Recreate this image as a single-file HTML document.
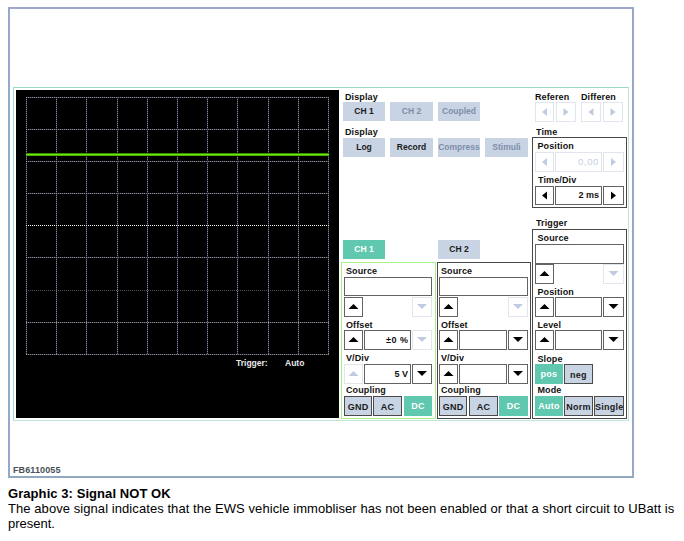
<!DOCTYPE html><html><head><meta charset="utf-8"><style>
html,body{margin:0;padding:0;background:#fff;width:684px;height:541px;overflow:hidden;}
body{position:relative;font-family:"Liberation Sans",sans-serif;}
div{position:absolute;box-sizing:border-box;}
.lbl{font-weight:bold;font-size:9px;line-height:12px;height:12px;color:#111;white-space:nowrap;letter-spacing:0.12px;}
.btn{background:#c8d4e4;font-weight:bold;font-size:8.5px;color:#1a1a1a;text-align:center;white-space:nowrap;}
.dis{color:#7e8ea8;}
.tl{background:#5fc8ae;color:#fff;}
.bb{border:1px solid #4a4a4a;}
.ab{border:1px solid #555;background:#fff;}
.abd{border:1px solid #e2e6ee;background:#fff;}
.fld{border:1px solid #636363;background:#fff;font-size:9px;font-weight:bold;text-align:right;white-space:nowrap;color:#111;}
svg{position:absolute;left:0;top:0;}
</style></head><body>
<div style="left:8px;top:7px;width:626px;height:471px;border:2px solid #94a8cc;border-top-color:#9ea8d0;border-bottom-color:#90a8c0;border-right-color:#98a8c8;"></div>
<div style="left:13px;top:87px;width:616px;height:334px;border:1px solid #9ed8c6;border-right-color:#c0e6da;border-bottom-color:#c2e6dc;"></div>
<div style="left:16px;top:90px;width:323px;height:328px;background:#000;"></div>
<div class="lbl" style="left:345px;top:90.73px;font-size:9px;color:#111;">Display</div>
<div class="btn btn" style="left:343px;top:102px;width:42px;height:19px;line-height:19px;font-size:8.5px;">CH 1</div>
<div class="btn btn dis" style="left:390px;top:102px;width:43px;height:19px;line-height:19px;font-size:8.5px;">CH 2</div>
<div class="btn btn dis" style="left:438px;top:102px;width:42px;height:19px;line-height:19px;font-size:8.5px;">Coupled</div>
<div class="lbl" style="left:345px;top:126.03px;font-size:9px;color:#111;">Display</div>
<div class="btn btn" style="left:343px;top:138px;width:42px;height:19px;line-height:19px;font-size:8.5px;">Log</div>
<div class="btn btn" style="left:390px;top:138px;width:43px;height:19px;line-height:19px;font-size:8.5px;">Record</div>
<div class="btn btn dis" style="left:438px;top:138px;width:42px;height:19px;line-height:19px;font-size:8.5px;">Compress</div>
<div class="btn btn dis" style="left:485px;top:138px;width:43px;height:19px;line-height:19px;font-size:8.5px;">Stimuli</div>
<div class="lbl" style="left:535px;top:90.73px;font-size:9px;color:#111;">Referen</div>
<div class="lbl" style="left:581px;top:90.73px;font-size:9px;color:#111;">Differen</div>
<div style="left:535px;top:102px;width:19px;height:20px;border:1px solid #e0e5ee;background:#fff;"></div>
<div style="left:556px;top:102px;width:20px;height:20px;border:1px solid #e0e5ee;background:#fff;"></div>
<div style="left:581px;top:102px;width:20px;height:20px;border:1px solid #e0e5ee;background:#fff;"></div>
<div style="left:603px;top:102px;width:20px;height:20px;border:1px solid #e0e5ee;background:#fff;"></div>
<div class="lbl" style="left:536px;top:125.63px;font-size:9px;color:#111;">Time</div>
<div style="left:532px;top:137px;width:95px;height:71px;border:1px solid #484848;"></div>
<div class="lbl" style="left:537.5px;top:140.03px;font-size:9px;color:#111;">Position</div>
<div style="left:535px;top:152px;width:19px;height:20px;border:1px solid #e0e5ee;background:#fff;"></div>
<div class="fld" style="left:555px;top:152px;width:47px;height:20px;line-height:18px;border-color:#e0e5ee;color:#c4d0e2;padding-right:2px;"><span style="font-weight:normal;letter-spacing:0.6px;font-size:9.5px">0,00</span></div>
<div style="left:603px;top:152px;width:21px;height:20px;border:1px solid #e0e5ee;background:#fff;"></div>
<div class="lbl" style="left:538px;top:174.03px;font-size:9px;color:#111;">Time/Div</div>
<div style="left:535px;top:186px;width:19px;height:19px;border:1px solid #636363;background:#fff;"></div>
<div class="fld" style="left:555px;top:186px;width:47px;height:19px;line-height:17px;border-color:#636363;color:#111;padding-right:2px;">2 ms</div>
<div style="left:603px;top:186px;width:21px;height:19px;border:1px solid #636363;background:#fff;"></div>
<div class="lbl" style="left:536px;top:217.03px;font-size:9px;color:#111;">Trigger</div>
<div style="left:532px;top:229px;width:95px;height:190px;border:1px solid #484848;"></div>
<div class="lbl" style="left:537.5px;top:232.03px;font-size:9px;color:#111;">Source</div>
<div class="fld" style="left:535px;top:244px;width:89px;height:20px;line-height:18px;border-color:#636363;color:#111;padding-right:2px;"></div>
<div style="left:535px;top:264px;width:19px;height:20px;border:1px solid #636363;background:#fff;"></div>
<div style="left:603px;top:264px;width:21px;height:20px;border:1px solid #e0e5ee;background:#fff;"></div>
<div class="lbl" style="left:537.5px;top:286.03px;font-size:9px;color:#111;">Position</div>
<div style="left:535px;top:297px;width:19px;height:20px;border:1px solid #636363;background:#fff;"></div>
<div class="fld" style="left:555px;top:297px;width:47px;height:20px;line-height:18px;border-color:#636363;color:#111;padding-right:2px;"></div>
<div style="left:603px;top:297px;width:21px;height:20px;border:1px solid #636363;background:#fff;"></div>
<div class="lbl" style="left:537.5px;top:319.03px;font-size:9px;color:#111;">Level</div>
<div style="left:535px;top:330px;width:19px;height:20px;border:1px solid #636363;background:#fff;"></div>
<div class="fld" style="left:555px;top:330px;width:47px;height:20px;line-height:18px;border-color:#636363;color:#111;padding-right:2px;"></div>
<div style="left:603px;top:330px;width:21px;height:20px;border:1px solid #636363;background:#fff;"></div>
<div class="lbl" style="left:537.5px;top:352.63px;font-size:9px;color:#111;">Slope</div>
<div class="btn btn tl" style="left:535px;top:364px;width:28px;height:20px;line-height:20px;font-size:9px;letter-spacing:0.25px;">pos</div>
<div class="btn btn bb" style="left:564px;top:364px;width:29px;height:20px;line-height:20px;font-size:9px;letter-spacing:0.25px;">neg</div>
<div class="lbl" style="left:537.5px;top:384.43px;font-size:9px;color:#111;">Mode</div>
<div class="btn btn tl" style="left:535px;top:396px;width:28px;height:20px;line-height:20px;font-size:9px;letter-spacing:0.25px;">Auto</div>
<div class="btn btn bb" style="left:564px;top:396px;width:29px;height:20px;line-height:20px;font-size:9px;letter-spacing:0.25px;">Norm</div>
<div class="btn btn bb" style="left:594px;top:396px;width:30px;height:20px;line-height:20px;font-size:9px;letter-spacing:0.25px;">Single</div>
<div class="btn btn tl" style="left:343px;top:240px;width:42px;height:19px;line-height:19px;font-size:8.5px;">CH 1</div>
<div class="btn btn" style="left:438px;top:240px;width:42px;height:19px;line-height:19px;font-size:8.5px;">CH 2</div>
<div style="left:341px;top:262px;width:95px;height:157px;border:1px solid #a8f088;"></div>
<div class="lbl" style="left:346px;top:264.73px;font-size:9px;color:#111;">Source</div>
<div class="fld" style="left:344px;top:277px;width:88px;height:19px;line-height:17px;border-color:#636363;color:#111;padding-right:2px;"></div>
<div style="left:344px;top:297px;width:19px;height:20px;border:1px solid #636363;background:#fff;"></div>
<div style="left:412px;top:297px;width:20px;height:20px;border:1px solid #e0e5ee;background:#fff;"></div>
<div class="lbl" style="left:346px;top:318.83px;font-size:9px;color:#111;">Offset</div>
<div style="left:344px;top:330px;width:19px;height:20px;border:1px solid #636363;background:#fff;"></div>
<div class="fld" style="left:364px;top:330px;width:47px;height:20px;line-height:18px;border-color:#636363;color:#111;padding-right:2px;"><span style="letter-spacing:0.5px;margin-right:-0.5px">&plusmn;0 %</span></div>
<div style="left:412px;top:330px;width:20px;height:20px;border:1px solid #e0e5ee;background:#fff;"></div>
<div class="lbl" style="left:346px;top:351.73px;font-size:9px;color:#111;">V/Div</div>
<div style="left:344px;top:364px;width:19px;height:20px;border:1px solid #e0e5ee;background:#fff;"></div>
<div class="fld" style="left:364px;top:364px;width:47px;height:20px;line-height:18px;border-color:#636363;color:#111;padding-right:2px;">5 V</div>
<div style="left:412px;top:364px;width:20px;height:20px;border:1px solid #636363;background:#fff;"></div>
<div class="lbl" style="left:346px;top:384.43px;font-size:9px;color:#111;">Coupling</div>
<div class="btn btn bb" style="left:344px;top:396px;width:28px;height:20px;line-height:20px;font-size:9px;letter-spacing:0.25px;">GND</div>
<div class="btn btn bb" style="left:373px;top:396px;width:29px;height:20px;line-height:20px;font-size:9px;letter-spacing:0.25px;">AC</div>
<div class="btn btn tl" style="left:404px;top:396px;width:28px;height:20px;line-height:20px;font-size:9px;letter-spacing:0.25px;">DC</div>
<div style="left:437px;top:262px;width:94px;height:157px;border:1px solid #484848;"></div>
<div class="lbl" style="left:441px;top:264.73px;font-size:9px;color:#111;">Source</div>
<div class="fld" style="left:439px;top:277px;width:89px;height:19px;line-height:17px;border-color:#636363;color:#111;padding-right:2px;"></div>
<div style="left:439px;top:297px;width:19px;height:20px;border:1px solid #636363;background:#fff;"></div>
<div style="left:508px;top:297px;width:20px;height:20px;border:1px solid #e0e5ee;background:#fff;"></div>
<div class="lbl" style="left:441px;top:318.83px;font-size:9px;color:#111;">Offset</div>
<div style="left:439px;top:330px;width:19px;height:20px;border:1px solid #636363;background:#fff;"></div>
<div class="fld" style="left:459px;top:330px;width:48px;height:20px;line-height:18px;border-color:#636363;color:#111;padding-right:2px;"></div>
<div style="left:508px;top:330px;width:20px;height:20px;border:1px solid #636363;background:#fff;"></div>
<div class="lbl" style="left:441px;top:351.73px;font-size:9px;color:#111;">V/Div</div>
<div style="left:439px;top:364px;width:19px;height:20px;border:1px solid #636363;background:#fff;"></div>
<div class="fld" style="left:459px;top:364px;width:48px;height:20px;line-height:18px;border-color:#636363;color:#111;padding-right:2px;"></div>
<div style="left:508px;top:364px;width:20px;height:20px;border:1px solid #636363;background:#fff;"></div>
<div class="lbl" style="left:441px;top:384.43px;font-size:9px;color:#111;">Coupling</div>
<div class="btn btn bb" style="left:439px;top:396px;width:28px;height:20px;line-height:20px;font-size:9px;letter-spacing:0.25px;">GND</div>
<div class="btn btn bb" style="left:469px;top:396px;width:29px;height:20px;line-height:20px;font-size:9px;letter-spacing:0.25px;">AC</div>
<div class="btn btn tl" style="left:499px;top:396px;width:29px;height:20px;line-height:20px;font-size:9px;letter-spacing:0.25px;">DC</div>
<div class="lbl" style="left:236px;top:357.49px;font-size:8.5px;color:#e8e8e8;letter-spacing:0;">Trigger:</div>
<div class="lbl" style="left:285px;top:357.49px;font-size:8.5px;color:#e8e8e8;letter-spacing:0;">Auto</div>
<div class="lbl" style="left:13px;top:463.83px;font-size:9px;color:#485058;">FB6110055</div>
<div style="left:8px;top:486px;width:680px;font-size:13px;line-height:15px;color:#000;white-space:nowrap;"><b style="letter-spacing:0.07px">Graphic 3: Signal NOT OK</b><br><span style="letter-spacing:0.07px">The above signal indicates that the EWS vehicle immobliser has not been enabled or that a short circuit to UBatt is</span><br>present.</div>
<svg width="684" height="541" shape-rendering="crispEdges">
<line x1="26.5" y1="97" x2="26.5" y2="355" stroke="#2c3040" stroke-width="1"/>
<line x1="26.5" y1="97" x2="26.5" y2="355" stroke="#8088a0" stroke-width="1" stroke-dasharray="1 1"/>
<line x1="56.5" y1="97" x2="56.5" y2="355" stroke="#2c3040" stroke-width="1"/>
<line x1="56.5" y1="97" x2="56.5" y2="355" stroke="#8088a0" stroke-width="1" stroke-dasharray="1 1"/>
<line x1="86.5" y1="97" x2="86.5" y2="355" stroke="#2c3040" stroke-width="1"/>
<line x1="86.5" y1="97" x2="86.5" y2="355" stroke="#8088a0" stroke-width="1" stroke-dasharray="1 1"/>
<line x1="117.5" y1="97" x2="117.5" y2="355" stroke="#2c3040" stroke-width="1"/>
<line x1="117.5" y1="97" x2="117.5" y2="355" stroke="#8088a0" stroke-width="1" stroke-dasharray="1 1"/>
<line x1="147.5" y1="97" x2="147.5" y2="355" stroke="#2c3040" stroke-width="1"/>
<line x1="147.5" y1="97" x2="147.5" y2="355" stroke="#8088a0" stroke-width="1" stroke-dasharray="1 1"/>
<line x1="177.5" y1="97" x2="177.5" y2="355" stroke="#2c3040" stroke-width="1"/>
<line x1="177.5" y1="97" x2="177.5" y2="355" stroke="#8088a0" stroke-width="1" stroke-dasharray="1 1"/>
<line x1="207.5" y1="97" x2="207.5" y2="355" stroke="#2c3040" stroke-width="1"/>
<line x1="207.5" y1="97" x2="207.5" y2="355" stroke="#8088a0" stroke-width="1" stroke-dasharray="1 1"/>
<line x1="237.5" y1="97" x2="237.5" y2="355" stroke="#2c3040" stroke-width="1"/>
<line x1="237.5" y1="97" x2="237.5" y2="355" stroke="#8088a0" stroke-width="1" stroke-dasharray="1 1"/>
<line x1="268.5" y1="97" x2="268.5" y2="355" stroke="#2c3040" stroke-width="1"/>
<line x1="268.5" y1="97" x2="268.5" y2="355" stroke="#8088a0" stroke-width="1" stroke-dasharray="1 1"/>
<line x1="298.5" y1="97" x2="298.5" y2="355" stroke="#2c3040" stroke-width="1"/>
<line x1="298.5" y1="97" x2="298.5" y2="355" stroke="#8088a0" stroke-width="1" stroke-dasharray="1 1"/>
<line x1="328.5" y1="97" x2="328.5" y2="355" stroke="#2c3040" stroke-width="1"/>
<line x1="328.5" y1="97" x2="328.5" y2="355" stroke="#8088a0" stroke-width="1" stroke-dasharray="1 1"/>
<line x1="26" y1="97.5" x2="329" y2="97.5" stroke="#2c2e36" stroke-width="1"/>
<line x1="26" y1="97.5" x2="329" y2="97.5" stroke="#888c9a" stroke-width="1" stroke-dasharray="1 1"/>
<line x1="26" y1="129.5" x2="329" y2="129.5" stroke="#2c2e36" stroke-width="1"/>
<line x1="26" y1="129.5" x2="329" y2="129.5" stroke="#888c9a" stroke-width="1" stroke-dasharray="1 1"/>
<line x1="26" y1="161.5" x2="329" y2="161.5" stroke="#2c2e36" stroke-width="1"/>
<line x1="26" y1="161.5" x2="329" y2="161.5" stroke="#888c9a" stroke-width="1" stroke-dasharray="1 1"/>
<line x1="26" y1="193.5" x2="329" y2="193.5" stroke="#2c2e36" stroke-width="1"/>
<line x1="26" y1="193.5" x2="329" y2="193.5" stroke="#888c9a" stroke-width="1" stroke-dasharray="1 1"/>
<line x1="26" y1="225.5" x2="329" y2="225.5" stroke="#f4f4f4" stroke-width="1" stroke-dasharray="1 1"/>
<line x1="26" y1="257.5" x2="329" y2="257.5" stroke="#2c2e36" stroke-width="1"/>
<line x1="26" y1="257.5" x2="329" y2="257.5" stroke="#888c9a" stroke-width="1" stroke-dasharray="1 1"/>
<line x1="26" y1="290.5" x2="329" y2="290.5" stroke="#4a4d58" stroke-width="1" stroke-dasharray="1 1"/>
<line x1="26" y1="322.5" x2="329" y2="322.5" stroke="#2c2e36" stroke-width="1"/>
<line x1="26" y1="322.5" x2="329" y2="322.5" stroke="#888c9a" stroke-width="1" stroke-dasharray="1 1"/>
<line x1="26" y1="354.5" x2="329" y2="354.5" stroke="#2c2e36" stroke-width="1"/>
<line x1="26" y1="354.5" x2="329" y2="354.5" stroke="#888c9a" stroke-width="1" stroke-dasharray="1 1"/>
<rect x="26" y="153" width="303" height="1" fill="#3c8c00"/><rect x="26" y="154" width="303" height="1" fill="#66ec00"/><rect x="26" y="155" width="303" height="1" fill="#4cb000"/>
<polygon points="542.0,112.0 547.0,108.0 547.0,116.0" fill="#bfcbe0" shape-rendering="geometricPrecision"/>
<polygon points="568.5,112.0 563.5,108.0 563.5,116.0" fill="#bfcbe0" shape-rendering="geometricPrecision"/>
<polygon points="588.5,112.0 593.5,108.0 593.5,116.0" fill="#bfcbe0" shape-rendering="geometricPrecision"/>
<polygon points="615.5,112.0 610.5,108.0 610.5,116.0" fill="#bfcbe0" shape-rendering="geometricPrecision"/>
<polygon points="542.0,162.0 547.0,158.0 547.0,166.0" fill="#bfcbe0" shape-rendering="geometricPrecision"/>
<polygon points="616.0,162.0 611.0,158.0 611.0,166.0" fill="#bfcbe0" shape-rendering="geometricPrecision"/>
<polygon points="542.0,195.5 547.0,191.5 547.0,199.5" fill="#000" shape-rendering="geometricPrecision"/>
<polygon points="616.0,195.5 611.0,191.5 611.0,199.5" fill="#000" shape-rendering="geometricPrecision"/>
<polygon points="544.5,271.0 539.5,276.0 549.5,276.0" fill="#000" shape-rendering="geometricPrecision"/>
<polygon points="613.5,276.0 608.5,271.0 618.5,271.0" fill="#bfcbe0" shape-rendering="geometricPrecision"/>
<polygon points="544.5,304.0 539.5,309.0 549.5,309.0" fill="#000" shape-rendering="geometricPrecision"/>
<polygon points="613.5,309.0 608.5,304.0 618.5,304.0" fill="#000" shape-rendering="geometricPrecision"/>
<polygon points="544.5,337.0 539.5,342.0 549.5,342.0" fill="#000" shape-rendering="geometricPrecision"/>
<polygon points="613.5,342.0 608.5,337.0 618.5,337.0" fill="#000" shape-rendering="geometricPrecision"/>
<polygon points="353.5,304.0 348.5,309.0 358.5,309.0" fill="#000" shape-rendering="geometricPrecision"/>
<polygon points="422.0,309.0 417.0,304.0 427.0,304.0" fill="#bfcbe0" shape-rendering="geometricPrecision"/>
<polygon points="353.5,337.0 348.5,342.0 358.5,342.0" fill="#000" shape-rendering="geometricPrecision"/>
<polygon points="422.0,342.0 417.0,337.0 427.0,337.0" fill="#bfcbe0" shape-rendering="geometricPrecision"/>
<polygon points="353.5,371.0 348.5,376.0 358.5,376.0" fill="#bfcbe0" shape-rendering="geometricPrecision"/>
<polygon points="422.0,376.0 417.0,371.0 427.0,371.0" fill="#000" shape-rendering="geometricPrecision"/>
<polygon points="448.5,304.0 443.5,309.0 453.5,309.0" fill="#000" shape-rendering="geometricPrecision"/>
<polygon points="518.0,309.0 513.0,304.0 523.0,304.0" fill="#bfcbe0" shape-rendering="geometricPrecision"/>
<polygon points="448.5,337.0 443.5,342.0 453.5,342.0" fill="#000" shape-rendering="geometricPrecision"/>
<polygon points="518.0,342.0 513.0,337.0 523.0,337.0" fill="#000" shape-rendering="geometricPrecision"/>
<polygon points="448.5,371.0 443.5,376.0 453.5,376.0" fill="#000" shape-rendering="geometricPrecision"/>
<polygon points="518.0,376.0 513.0,371.0 523.0,371.0" fill="#000" shape-rendering="geometricPrecision"/>
</svg>
</body></html>
